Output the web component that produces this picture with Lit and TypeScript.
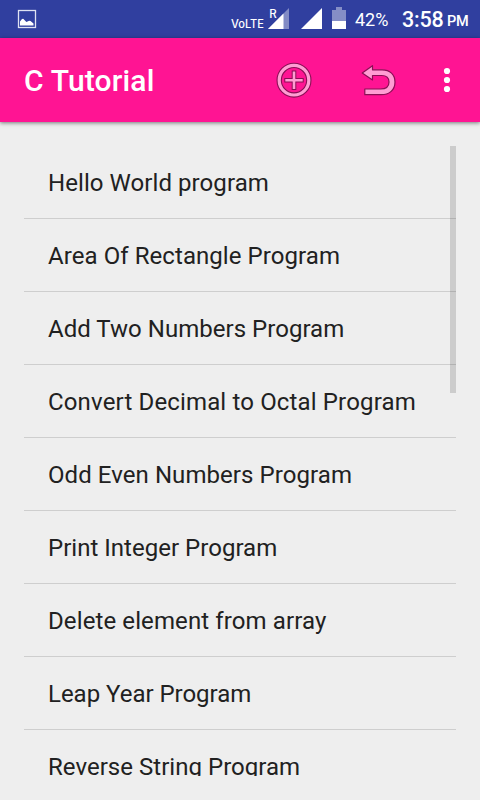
import { LitElement, html, css } from "lit";
import { customElement, property } from "lit/decorators.js";
import { styleMap } from "lit/directives/style-map.js";

@customElement("status-bar")
class StatusBar extends LitElement {
  static styles = css`
    :host {
      display: flex;
      height: 38px;
      background: #303f9f;
      color: #fff;
      font-family: Roboto, sans-serif;
      line-height: 38px;
      white-space: nowrap;
    }
    svg { display: block; flex: none; }
    .picture { margin-left: 17px; }
    .radio { margin-left: auto; }
    .volte { font: 500 11.5px Inter, sans-serif; fill: #fff; }
    .roaming { font: 500 11.5px Inter, sans-serif; fill: #fff; }
    .battery { width: 33px; margin-left: 9px; font-size: 18px; padding-top: 1px; }
    .time { width: 41px; margin-left: 14px; font-size: 21.5px; font-weight: 500; letter-spacing: -0.2px; padding-top: 1px; }
    .meridiem { width: 21px; margin: 0 12px 0 4px; font-size: 14.5px; font-weight: 500; letter-spacing: -0.2px; padding-top: 3px; }
  `;

  render() {
    return html`
      <svg class="picture" width="20" height="38" viewBox="17 0 20 38">
        <rect x="18.5" y="10.5" width="17" height="17" fill="none" stroke="#dfe2f2" stroke-width="1.3" />
        <path d="M20 25.500V21.500l2-2.500 1.200-.3 3.200 3.200 2.800-1.200 1.300.3 3 2.400v2.100z" fill="#fff" />
      </svg>
      <svg class="radio" width="116" height="38" viewBox="230 0 116 38">
        <text class="volte" x="231" y="28" textLength="33" lengthAdjust="spacingAndGlyphs">VoLTE</text>
        <path d="M289 8v21h-21z" fill="#828bc5" />
        <path d="M283.5 13.5V29H268z" fill="#fff" />
        <path d="M269 8h9v10h-9z" fill="#303f9f" />
        <text class="roaming" x="269.2" y="17.6">R</text>
        <path d="M322 8v21h-21z" fill="#fff" />
        <path d="M336 7h6v3h4v11h-14V10h4z" fill="#858ec6" />
        <path d="M332 21h14v8h-14z" fill="#fff" />
      </svg>
      <span class="battery">42%</span>
      <span class="time">3:58</span>
      <span class="meridiem">PM</span>
    `;
  }
}

@customElement("tool-bar")
class ToolBar extends LitElement {
  @property() heading = "";

  static styles = css`
    :host {
      display: flex;
      align-items: center;
      height: 84px;
      box-sizing: border-box;
      padding: 0 24px;
      background: #ff1493;
      box-shadow: 0 1px 4px rgba(0, 0, 0, 0.5);
      color: #fff;
      font-family: Roboto, sans-serif;
      position: relative;
    }
    .title { flex: 1; margin: 0; font-size: 30px; font-weight: 500; letter-spacing: 0.17px; line-height: 84px; padding-top: 2px; }
    svg { display: block; flex: none; }
    .undo { margin-left: 48px; }
    .more { margin-left: 46px; }
  `;

  render() {
    return html`
      <h1 class="title">${this.heading}</h1>
      <svg width="36" height="84" viewBox="276 38 36 84">
        <circle cx="294" cy="80.2" r="14.8" fill="none" stroke="#8a0f55" stroke-width="5.4" />
        <circle cx="294" cy="80.2" r="14.8" fill="none" stroke="#ff9dd3" stroke-width="3.2" />
        <path d="M294 70.500v19.400M284.300 80.200h19.400" stroke="#8a0f55" stroke-width="4.6" />
        <path d="M294 71.500v17.400M285.300 80.200h17.400" stroke="#ff9dd3" stroke-width="2.6" />
      </svg>
      <svg class="undo" width="36" height="84" viewBox="360 38 36 84">
        <path d="M362.200 73l10.300-7.300v4.100h9.500c8 0 13 4.700 13 12.200 0 8-5.500 12.700-14 12.700h-16.200v-5.700h15.700c5.500 0 8.500-2.700 8.500-7 0-4.300-2.700-6.500-7.500-6.500h-9v4.500z" fill="#ff9dd3" stroke="#8a0f55" stroke-width="1.2" stroke-linejoin="round" />
      </svg>
      <svg class="more" width="14" height="84" viewBox="442 38 14 84" fill="#fff">
        <circle cx="447" cy="71" r="3.1" />
        <circle cx="447" cy="80" r="3.1" />
        <circle cx="447" cy="89" r="3.1" />
      </svg>
    `;
  }
}

@customElement("app-root")
class AppRoot extends LitElement {
  private programs = [
    { name: "Hello World program", tracking: 0.07 },
    { name: "Area Of Rectangle Program", tracking: 0.07 },
    { name: "Add Two Numbers Program", tracking: 0.03 },
    { name: "Convert Decimal to Octal Program", tracking: 0.15 },
    { name: "Odd Even Numbers Program", tracking: 0.07 },
    { name: "Print Integer Program", tracking: 0.02 },
    { name: "Delete element from array", tracking: 0.11 },
    { name: "Leap Year Program", tracking: -0.02 },
    { name: "Reverse String Program", tracking: 0.03 },
  ];

  static styles = css`
    :host {
      display: flex;
      flex-direction: column;
      width: 480px;
      height: 800px;
      overflow: hidden;
      background: #eee;
      font-family: Roboto, sans-serif;
    }
    status-bar, tool-bar { flex: none; }
    .content { flex: 1; min-height: 0; padding: 24px; display: flex; }
    .list {
      position: relative;
      flex: 1;
      margin: 0;
      padding: 0;
      list-style: none;
      overflow: hidden;
    }
    .row {
      height: 72px;
      padding-left: 24px;
      border-bottom: 1px solid #cecece;
      color: #212121;
      font-size: 24px;
      line-height: 74px;
      white-space: nowrap;
    }
    .thumb {
      position: absolute;
      top: 0;
      right: 0;
      width: 6px;
      height: 247px;
      background: rgba(0, 0, 0, 0.14);
    }
  `;

  render() {
    return html`
      <status-bar></status-bar>
      <tool-bar heading="C Tutorial"></tool-bar>
      <main class="content">
        <ul class="list">
          ${this.programs.map(
            ({ name, tracking }) =>
              html`<li class="row" style=${styleMap({ letterSpacing: `${tracking}px` })}>${name}</li>`
          )}
          <div class="thumb"></div>
        </ul>
      </main>
    `;
  }
}
